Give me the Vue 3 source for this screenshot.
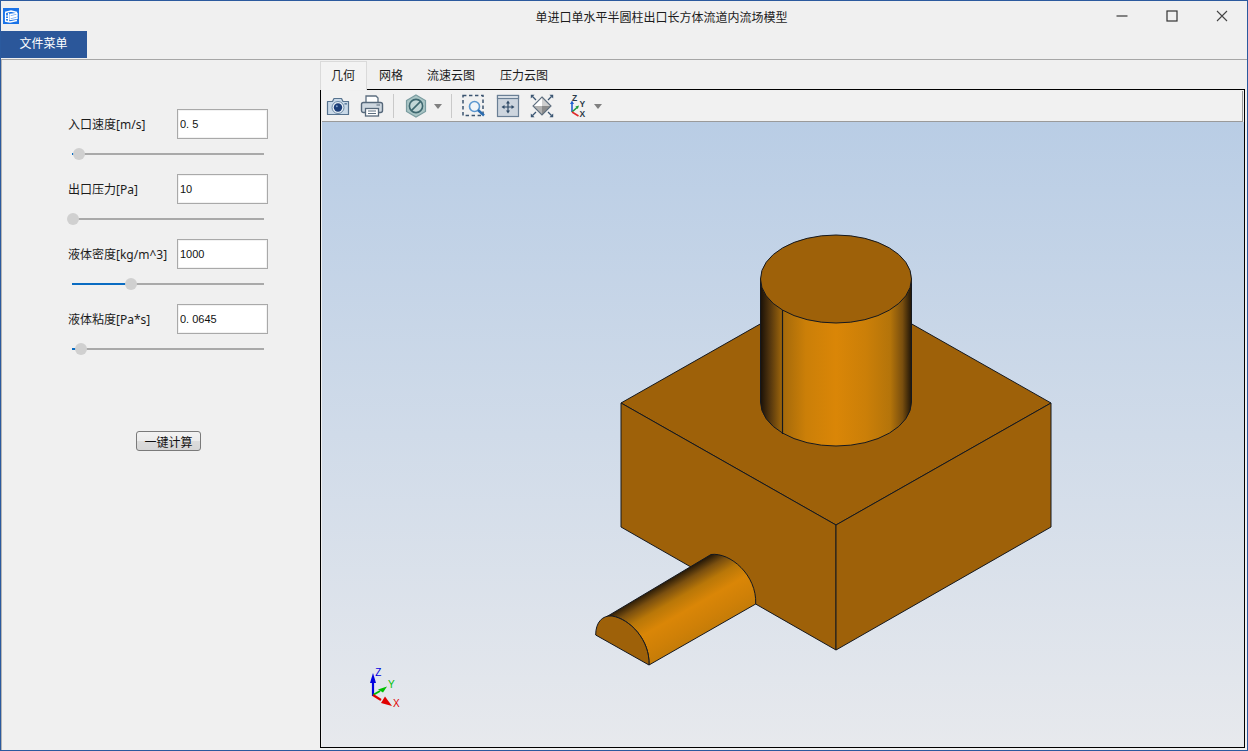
<script setup>
const params = [
  { name: '入口速度', unit: '[m/s]', value: '0. 5', pos: 7 },
  { name: '出口压力', unit: '[Pa]', value: '10', pos: 1 },
  { name: '液体密度', unit: '[kg/m^3]', value: '1000', pos: 59 },
  { name: '液体粘度', unit: '[Pa*s]', value: '0. 0645', pos: 9 }
]
const tabs = ['几何', '网格', '流速云图', '压力云图']
</script>

<template>
  <div class="window">
    <header class="titlebar">
      <svg class="app-icon" viewBox="0 0 16 16">
        <rect width="16" height="16" fill="#1a73e8" />
        <path d="M2 4.5 L8 3 L14 4.5 M7 6.5 L14 5.5 V7.5 L7 8.5 Z M7 9.5 L14 8.5 V10.5 L7 11.5 Z M2 13 L7 14 L14 12.5" fill="none" stroke="#fff" stroke-width="1.3" />
        <path d="M2.5 5 V13 M5.5 5 V13 M2.5 8 H5.5 M2.5 10.5 H5.5" fill="none" stroke="#fff" stroke-width="1.2" />
      </svg>
      <div class="title">单进口单水平半圆柱出口长方体流道内流场模型</div>
      <div class="controls">
        <div class="control">
          <svg viewBox="0 0 12 12"><path d="M0.5 6 H11.5" stroke="#666" stroke-width="1.6" /></svg>
        </div>
        <div class="control">
          <svg viewBox="0 0 12 12"><rect x="1" y="1" width="10" height="10" fill="none" stroke="#333" stroke-width="1.2" /></svg>
        </div>
        <div class="control">
          <svg viewBox="0 0 12 12"><path d="M1 1 L11 11 M11 1 L1 11" stroke="#444" stroke-width="1.1" fill="none" /></svg>
        </div>
      </div>
    </header>

    <nav class="menubar">
      <div class="menu-tab">文件菜单</div>
    </nav>

    <main class="body">
      <aside class="side">
        <section v-for="p in params" :key="p.name" class="param">
          <div class="param-row">
            <span class="param-label">{{ p.name }}<span class="unit">{{ p.unit }}</span></span>
            <input class="param-input" :value="p.value" readonly />
          </div>
          <div class="slider">
            <div class="slider-fill" :style="{ width: p.pos + 'px' }"></div>
            <div class="slider-thumb" :style="{ left: p.pos + 'px' }"></div>
          </div>
        </section>
        <button class="calc">一键计算</button>
      </aside>

      <section class="content">
        <div class="tabs">
          <div v-for="(t, i) in tabs" :key="t" class="tab" :class="{ active: i === 0 }">{{ t }}</div>
        </div>
        <div class="frame">
          <div class="toolbar">
            <svg class="tool" viewBox="0 0 24 24">
              <path d="M1.5 7.5 H6.5 L8 4.5 H15.5 L17 7.5 H22.5 V20.5 H1.5 Z" fill="#c9d9e8" stroke="#56728e" stroke-width="1.2" stroke-linejoin="round" />
              <circle cx="12" cy="13.5" r="6" fill="#e8eff6" stroke="#6b89a6" />
              <circle cx="12" cy="13.5" r="4.2" fill="#1d3f78" />
              <circle cx="10.8" cy="12.3" r="1" fill="#7f9fc8" />
              <rect x="18.5" y="9" width="2.4" height="1.6" fill="#5f7f9f" />
            </svg>
            <svg class="tool" viewBox="0 0 24 24">
              <path d="M6 9 V2 H16 L18 4 V9" fill="#fff" stroke="#5d6f80" stroke-width="1.3" />
              <rect x="1.5" y="8.5" width="21" height="10" rx="2" fill="#cfd8e0" stroke="#56687a" stroke-width="1.4" />
              <rect x="5.5" y="14.5" width="13" height="7.5" fill="#fff" stroke="#56687a" stroke-width="1.3" />
              <path d="M8 17 H16 M8 19.5 H16" stroke="#5d6f80" stroke-width="1" />
              <path d="M16.5 11 H20" stroke="#6b7c8c" stroke-width="1.2" />
            </svg>
            <div class="sep"></div>
            <svg class="tool" viewBox="0 0 24 24">
              <path d="M12 1 L21.5 6.5 V17.5 L12 23 L2.5 17.5 V6.5 Z" fill="#a9c5c5" stroke="#7a9ca0" stroke-width="1.2" />
              <circle cx="12" cy="12" r="6.6" fill="#c2d6d6" stroke="#3e6870" stroke-width="1.6" />
              <path d="M7.6 16.4 L16.4 7.6" stroke="#3e6870" stroke-width="1.6" />
            </svg>
            <svg class="caret" viewBox="0 0 8 5"><path d="M0 0 H8 L4 5 Z" fill="#808080" /></svg>
            <div class="sep"></div>
            <svg class="tool shift-left" viewBox="0 0 24 24">
              <rect x="2" y="1.5" width="20" height="20" fill="none" stroke="#3b5470" stroke-width="1.5" stroke-dasharray="3.4 2.6" />
              <circle cx="13.5" cy="12.5" r="5" fill="#f0f4f8" stroke="#5b97cf" stroke-width="1.6" />
              <path d="M17 16 L23 21.5" stroke="#2b6cb0" stroke-width="2.4" />
            </svg>
            <svg class="tool shift-right" viewBox="0 0 24 24">
              <rect x="1.5" y="1.5" width="21" height="21" fill="#cdd5de" stroke="#6a7f95" stroke-width="1.2" />
              <rect x="1.5" y="1.5" width="21" height="3" fill="#e4e9ee" stroke="#6a7f95" stroke-width="1.2" />
              <path d="M12 8.5 V17.5 M7.5 13 H16.5" stroke="#2f4a66" stroke-width="1.2" />
              <path d="M12 6.5 L14 9.5 H10 Z M12 19.5 L14 16.5 H10 Z M5.5 13 L8.5 11 V15 Z M18.5 13 L15.5 11 V15 Z" fill="#2f4a66" />
            </svg>
            <svg class="tool" viewBox="0 0 24 24">
              <path d="M12 3 V12 H3 Z" fill="#fdfdfd" />
              <path d="M12 3 V12 H21 Z" fill="#cfcfcf" />
              <path d="M12 21 V12 H3 Z" fill="#b2b2b2" />
              <path d="M12 21 V12 H21 Z" fill="#8c8c8c" />
              <path d="M12 3 L21 12 L12 21 L3 12 Z" fill="none" stroke="#5e6e7e" stroke-width="1.1" />
              <path d="M2.5 2.5 L6 6 M21.5 2.5 L18 6 M2.5 21.5 L6 18 M21.5 21.5 L18 18" stroke="#3a5572" stroke-width="1.3" />
              <path d="M0.8 0.8 H4.6 L0.8 4.6 Z M23.2 0.8 H19.4 L23.2 4.6 Z M0.8 23.2 H4.6 L0.8 19.4 Z M23.2 23.2 H19.4 L23.2 19.4 Z" fill="#3a5572" />
            </svg>
            <svg class="tool shift-right" viewBox="0 0 24 24">
              <path d="M7 18 V9" stroke="#1f5fd0" stroke-width="1.6" />
              <path d="M7 6.5 L9 10 H5 Z" fill="#1f5fd0" />
              <path d="M7 18 L12 13.5" stroke="#1f9a3c" stroke-width="1.6" />
              <path d="M14 11.5 L12.8 15 L10.4 12.5 Z" fill="#1f9a3c" />
              <path d="M7 18 L13.5 22" stroke="#e02a2a" stroke-width="1.6" />
              <text x="7" y="6.5" class="mini">Z</text>
              <text x="14.5" y="13" class="mini">Y</text>
              <text x="14.5" y="23" class="mini">X</text>
            </svg>
            <svg class="caret last" viewBox="0 0 8 5"><path d="M0 0 H8 L4 5 Z" fill="#808080" /></svg>
          </div>

          <div class="canvas">
            <svg class="scene" viewBox="322 122 922 625" preserveAspectRatio="none">
              <defs>
                <linearGradient id="cyl" gradientUnits="userSpaceOnUse" x1="760.5" y1="0" x2="911.5" y2="0">
                  <stop offset="0" stop-color="#1a1108" />
                  <stop offset="0.07" stop-color="#5a3a0e" />
                  <stop offset="0.15" stop-color="#a56a0b" />
                  <stop offset="0.3" stop-color="#cb7f08" />
                  <stop offset="0.5" stop-color="#da8607" />
                  <stop offset="0.7" stop-color="#cb7f08" />
                  <stop offset="0.86" stop-color="#b4740a" />
                  <stop offset="0.94" stop-color="#7a4f0e" />
                  <stop offset="1" stop-color="#1f1508" />
                </linearGradient>
                <linearGradient id="half" gradientUnits="userSpaceOnUse" x1="659" y1="585.5" x2="691" y2="641">
                  <stop offset="0" stop-color="#2a1b08" />
                  <stop offset="0.14" stop-color="#7a4f0f" />
                  <stop offset="0.32" stop-color="#b97708" />
                  <stop offset="0.55" stop-color="#da8607" />
                  <stop offset="0.82" stop-color="#cf8007" />
                  <stop offset="1" stop-color="#c57c08" />
                </linearGradient>
              </defs>
              <g stroke="#14181f" stroke-width="1" stroke-linejoin="round">
                <path d="M621 403 L836 281 L1051 403 L836 525 Z" fill="#9e6109" />
                <path d="M621 403 L836 525 V650 L621 527 Z" fill="#9e6109" />
                <path d="M1051 403 L836 525 V650 L1051 527 Z" fill="#9e6109" />
                <path d="M760.5 279 V402 A75.5 44 0 0 0 911.5 402 V279 Z" fill="url(#cyl)" />
                <path d="M782.5 310 V434" fill="none" stroke-width="1.2" />
                <ellipse cx="836" cy="279" rx="75.5" ry="44" fill="#9e6109" />
                <path d="M607 616.5 L711 554.5 C730 552 757 575 755.7 604 L649 665 C650 640 630 619 612 616 Z" fill="url(#half)" />
                <path d="M595.7 635 C595.5 622 603 615 612 616 C630 619 650 640 649 665 Z" fill="#9e6109" />
              </g>
              <path d="M373 696 V680" stroke="#0000e0" stroke-width="2.2" />
              <path d="M373 673 L376 683 H370 Z" fill="#0000e0" />
              <path d="M373 695 L380 691" stroke="#00c000" stroke-width="2" />
              <path d="M387 686.5 L383 692.5 L378 689.5 Z" fill="#00c000" />
              <path d="M373 695 L381 700" stroke="#e00000" stroke-width="2.2" />
              <path d="M392 706 L381 703 L385 696.5 Z" fill="#e00000" />
              <text x="375.3" y="676" class="axis az">Z</text>
              <text x="388" y="688" class="axis ay">Y</text>
              <text x="393" y="707" class="axis ax">X</text>
            </svg>
          </div>
        </div>
      </section>
    </main>
  </div>
</template>

<style>
html, body {
  margin: 0;
  background: #f0f0f0;
}
</style>

<style scoped>
.window {
  box-sizing: border-box;
  width: 1248px;
  height: 751px;
  border: 1px solid #2b5a9e;
  background: #f0f0f0;
  display: flex;
  flex-direction: column;
  overflow: hidden;
  font-family: "Liberation Sans", "Noto Sans CJK SC", sans-serif;
  font-size: 12px;
  color: #1c1c1c;
}
.titlebar {
  height: 30px;
  display: flex;
  align-items: center;
  flex: none;
}
.app-icon {
  width: 16px;
  height: 16px;
  margin-left: 2px;
  flex: none;
}
.title {
  flex: 1;
  text-align: center;
  padding-left: 207px;
  white-space: nowrap;
}
.controls {
  display: flex;
  height: 100%;
}
.control {
  width: 50px;
  display: flex;
  align-items: center;
  justify-content: center;
  padding-bottom: 1px;
  box-sizing: border-box;
}
.control svg {
  width: 12px;
  height: 12px;
}
.menubar {
  height: 27px;
  flex: none;
  margin-left: -1px;
}
.menu-tab {
  width: 87px;
  height: 27px;
  line-height: 27px;
  background: #2b579a;
  color: #fff;
  text-align: center;
}
.body {
  flex: 1;
  min-height: 0;
  margin-top: 1px;
  border-top: 1px solid #a6a6a6;
  border-left: 1px solid #b4b4b4;
  display: flex;
}
.side {
  width: 318px;
  flex: none;
  box-sizing: border-box;
  padding: 49px 0 0 66px;
}
.param {
  height: 65px;
}
.param-row {
  display: flex;
  align-items: center;
  height: 30px;
}
.param-label {
  width: 109px;
  flex: none;
  white-space: nowrap;
}
.unit {
  font-family: "Noto Sans", sans-serif;
  font-size: 12px;
}
.param-input {
  box-sizing: border-box;
  width: 91px;
  height: 30px;
  margin: 0;
  padding: 0 0 0 2px;
  background: #fff;
  border: 1px solid #a9a9a9;
  box-shadow: inset 0 0 0 1px #f2f2f2;
  border-radius: 0;
  outline: none;
  font-family: "Liberation Sans", sans-serif;
  font-size: 11px;
  color: #111;
}
.slider {
  position: relative;
  width: 192px;
  height: 2px;
  margin: 14px 0 0 4px;
  background: #a9a9a9;
}
.slider-fill {
  position: absolute;
  left: 0;
  top: 0;
  height: 2px;
  background: #0a6cc2;
}
.slider-thumb {
  position: absolute;
  top: -5px;
  width: 12px;
  height: 12px;
  margin-left: -6px;
  border-radius: 50%;
  background: #d0d0d0;
}
.calc {
  display: block;
  box-sizing: border-box;
  width: 65px;
  height: 20px;
  margin: 62px 0 0 68px;
  padding: 0;
  border: 1px solid #7a7a7a;
  border-radius: 3px;
  background: linear-gradient(#f2f2f2 0, #ececec 50%, #dcdcdc 50%, #d6d6d6 100%);
  font: inherit;
  color: #111;
}
.content {
  flex: 1;
  min-width: 0;
  display: flex;
  flex-direction: column;
  padding: 1px 2px 2px 0;
}
.tabs {
  display: flex;
  height: 28px;
  flex: none;
  position: relative;
  z-index: 1;
}
.tab {
  height: 28px;
  line-height: 30px;
  padding: 0 12px;
  white-space: nowrap;
}
.tab:last-child {
  margin-left: 1px;
}
.tab.active {
  box-sizing: border-box;
  width: 47px;
  height: 29px;
  padding: 0 10px;
  line-height: 28px;
  border: 1px solid #dadada;
  border-bottom: none;
  background: #f3f3f3;
}
.frame {
  flex: 1;
  min-height: 0;
  box-sizing: border-box;
  border: 1px solid #000;
  padding: 1px 0 0 1px;
  display: flex;
  flex-direction: column;
}
.toolbar {
  box-sizing: border-box;
  height: 31px;
  flex: none;
  display: flex;
  align-items: center;
  gap: 10px;
  margin-right: 1px;
  padding-left: 4px;
  background: #f1f1f1;
  border-right: 1px solid #9a9a9a;
  border-bottom: 1px solid #9a9a9a;
}
.tool {
  width: 24px;
  height: 24px;
  flex: none;
}
.shift-left {
  margin-left: -1px;
}
.shift-right {
  margin-left: 1px;
}
.sep {
  width: 1px;
  height: 24px;
  margin-left: -1px;
  background: #c9c9c9;
  flex: none;
}
.caret {
  width: 8px;
  height: 5px;
  margin-left: -4px;
  flex: none;
}
.caret.last {
  margin-left: -5px;
}
.mini {
  font-family: "Liberation Sans", sans-serif;
  font-size: 8.5px;
  font-weight: 700;
  fill: #2c3a48;
}
.canvas {
  flex: 1;
  min-height: 0;
  background: linear-gradient(#b9cde5, #e7e9ed);
}
.scene {
  display: block;
  width: 100%;
  height: 100%;
}
.axis {
  font-family: "Liberation Sans", sans-serif;
  font-size: 10px;
}
.az {
  fill: #0000e0;
}
.ay {
  fill: #00c000;
}
.ax {
  fill: #e00000;
}
</style>
